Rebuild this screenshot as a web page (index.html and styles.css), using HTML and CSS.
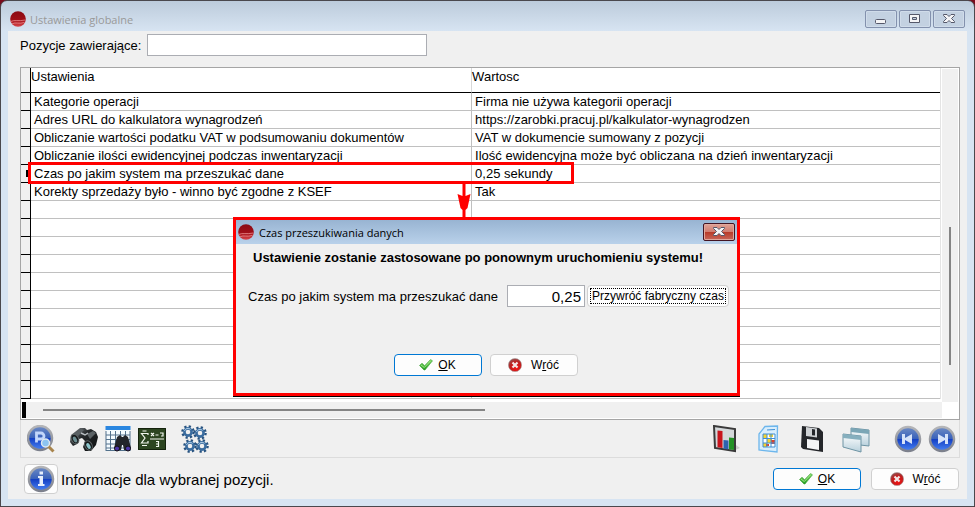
FILE: index.html
```
<!DOCTYPE html>
<html lang="pl">
<head>
  <meta charset="UTF-8" />
  <meta name="viewport" content="width=device-width, initial-scale=1.0" />
  <title>Ustawienia globalne</title>
  <link rel="stylesheet" href="styles.css">
</head>
<body>
  <svg class="defs" aria-hidden="true">
    <defs>
      <linearGradient id="redBall" x1="0" y1="0" x2="0" y2="1">
        <stop offset="0" stop-color="#8a0a14" />
        <stop offset="0.55" stop-color="#a00f18" />
        <stop offset="1" stop-color="#d8474c" />
      </linearGradient>
      <linearGradient id="green" x1="0" y1="0" x2="0" y2="1">
        <stop offset="0" stop-color="#7fdc62" />
        <stop offset="1" stop-color="#1f9a1c" />
      </linearGradient>
      <radialGradient id="redCross" cx="0.6" cy="0.75" r="0.8">
        <stop offset="0" stop-color="#f01414" />
        <stop offset="0.6" stop-color="#c01c1c" />
        <stop offset="1" stop-color="#8c5a5a" />
      </radialGradient>
      <linearGradient id="blue" x1="0" y1="0" x2="0" y2="1">
        <stop offset="0" stop-color="#6f8cc4" />
        <stop offset="0.48" stop-color="#3a62ba" />
        <stop offset="0.52" stop-color="#1440c4" />
        <stop offset="1" stop-color="#4a84f4" />
      </linearGradient>
      <linearGradient id="ring" x1="0" y1="0" x2="0" y2="1">
        <stop offset="0" stop-color="#b4b5b8" />
        <stop offset="1" stop-color="#7c808c" />
      </linearGradient>
      <linearGradient id="metal" x1="0" y1="0" x2="1" y2="1">
        <stop offset="0" stop-color="#8a9094" />
        <stop offset="0.4" stop-color="#25292b" />
        <stop offset="1" stop-color="#0c0e0f" />
      </linearGradient>
      <linearGradient id="glass" x1="0" y1="0" x2="0" y2="1">
        <stop offset="0" stop-color="#ffffff" />
        <stop offset="1" stop-color="#b8d0dc" />
      </linearGradient>
      <symbol id="logo" viewBox="0 0 16 16">
        <circle cx="8" cy="8" r="7.8" fill="url(#redBall)" />
        <path d="M.8 10.5C4 8.5 9 10.5 15.3 9M2 12.8c4-2 7 .6 12.5-1.4" fill="none" stroke="#e88a8c" stroke-width=".8" />
      </symbol>
      <symbol id="check" viewBox="0 0 14 12">
        <path d="M.5 6.5 3 4.2l2.6 2.5L11.5.6l2 1.200L6 11 5 11z" fill="url(#green)" stroke="#3b9c35" stroke-width=".6" />
        <path d="M2 6l3.300 2.500L11.800 1.600" fill="none" stroke="#b9f0a2" stroke-width=".8" />
      </symbol>
      <symbol id="cross" viewBox="0 0 14 14">
        <circle cx="7" cy="7" r="6.6" fill="url(#redCross)" stroke="#a99" stroke-width=".6" />
        <path d="M4.500 4.500l5 5m0-5l-5 5" stroke="#f4e6e6" stroke-width="2.200" />
      </symbol>
      <symbol id="binoculars" viewBox="0 0 28 28">
        <path d="M1 10 10 3l5 0 2 2 4-1 5 3 2 5-2 8-5 6-6 0-2-4 2-6-3-3-3 1-2 5-4 2-3-4z" fill="url(#metal)" />
        <path d="M4 9l7-5 3 1-6 6M17 9l6-3 3 2-6 6" fill="#5b6265" />
        <path d="M11 8l4 2 3-2" stroke="#b6bcc0" stroke-width="1.5" fill="none" />
        <ellipse cx="5" cy="14" rx="3.5" ry="5" fill="#15191a" stroke="#5d6466" transform="rotate(-28 5 14)" />
        <ellipse cx="5" cy="14.5" rx="1.8" ry="3.2" fill="#6c8e92" transform="rotate(-28 5 14.5)" />
        <ellipse cx="18.5" cy="20.500" rx="3.5" ry="5" fill="#15191a" stroke="#5d6466" transform="rotate(-28 18.5 20.5)" />
        <ellipse cx="18.5" cy="21" rx="1.8" ry="3.2" fill="#8fc6cc" transform="rotate(-28 18.5 21)" />
      </symbol>
      <symbol id="gear" viewBox="0 0 14 14">
        <circle cx="7" cy="7" r="5.6" fill="none" stroke="#27527f" stroke-width="2.400" stroke-dasharray="2.200 2.200" />
        <circle cx="7" cy="7" r="3.600" fill="none" stroke="#3a6c9f" stroke-width="2.600" />
        <path d="M3.500 6a3.600 3.600 0 0 1 6-1.600" fill="none" stroke="#b2d0ea" />
      </symbol>
      <symbol id="closeX" viewBox="0 0 12 12">
        <path d="M.5 1.500h3.500l2 2 2-2h3.500v1L8.500 5.500l3 3v1H8l-2-2-2 2H.5v-1l3-3-3-3z" fill="#f4f4f6" stroke="#55586a" />
      </symbol>
    </defs>
  </svg>

  <div class="window">
    <header class="titlebar">
      <svg class="logo"><use href="#logo" /></svg>
      <h1 class="title">Ustawienia globalne</h1>
      <div class="win-btns">
        <button class="win-btn" aria-label="Minimalizuj">
          <svg width="12" height="12" viewBox="0 0 12 12"><rect x=".5" y="6.500" width="10" height="4" rx="1" fill="#f4f4f6" stroke="#55586a" /></svg>
        </button>
        <button class="win-btn" aria-label="Maksymalizuj">
          <svg width="12" height="12" viewBox="0 0 12 12"><path d="M.5 1.500h10v8h-10zM3.500 4.500h4v2h-4z" fill="#f4f4f6" fill-rule="evenodd" stroke="#55586a" /></svg>
        </button>
        <button class="win-btn" aria-label="Zamknij"><svg width="12" height="12"><use href="#closeX" /></svg></button>
      </div>
    </header>

    <main class="content">
      <div class="search">
        <label for="filter">Pozycje zawierające:</label>
        <input type="text" id="filter" class="field">
      </div>

      <div class="grid">
        <div class="grid-body">
          <table class="settings">
            <colgroup>
              <col class="col-mark">
              <col class="col-name">
              <col>
            </colgroup>
            <thead>
              <tr>
                <th></th>
                <th>Ustawienia</th>
                <th>Wartosc</th>
              </tr>
            </thead>
            <tbody id="settingsBody"></tbody>
          </table>
          <div class="vscroll"><div class="vthumb"></div></div>
        </div>
        <div class="hscroll"><div class="hstop"></div><div class="hthumb"></div></div>
      </div>

      <div class="toolbar">
        <button class="tool" aria-label="Podgląd">
          <svg viewBox="0 0 28 28">
            <circle cx="13" cy="13" r="12" fill="url(#blue)" stroke="url(#ring)" stroke-width="2.500" />
            <path d="M9.500 17.500V8h4.500a3 3 0 0 1 0 6H10" fill="none" stroke="#c3d6fa" stroke-width="2.800" />
            <path d="M21 21l5.500 5.500" stroke="#a8844c" stroke-width="3" />
            <circle cx="18.500" cy="18" r="4" fill="#8cc4f2" stroke="#dfe8ee" stroke-width="1.500" />
          </svg>
        </button>
        <button class="tool gap-s" aria-label="Szukaj"><svg><use href="#binoculars" /></svg></button>
        <button class="tool" aria-label="Szukaj w tabeli">
          <svg viewBox="0 0 28 28">
            <path d="M2 1h24v25H2z" fill="#f4fbff" />
            <path d="M2 6v20M6.500 6v20M11.500 6v20M16.500 6v20M21.500 6v20M26 6v20M2 10h24M2 14.500h24M2 19h24M2 23h24M2 25.500h24" stroke="#52718c" fill="none" />
            <path d="M1.500 1h25v4h-25z" fill="#2a86e0" />
            <path d="M10 23l3-11 3-2 2 2h1l2-2 3 2 3 11-2 3-5-1-1-5h-1l-1 5-5 1z" fill="#22252a" />
            <circle cx="13" cy="23.500" r="2.500" fill="#4b35a8" stroke="#111" />
            <circle cx="24" cy="23.500" r="2.500" fill="#4b35a8" stroke="#111" />
          </svg>
        </button>
        <button class="tool" aria-label="Formuła">
          <svg viewBox="0 0 28 28">
            <path d="M0 3h28v22H0z" fill="#2c4520" />
            <path d="M.5 3.500h27v21H.5z" fill="none" stroke="#14220c" />
            <path d="M10 10V8.500H3.500L7 13l-3.500 5H10V16M4.500 6h4M4 20.500h5M12 14h14M13 8l3 3m0-3l-3 3M17.500 10h3M22 8h3v3h-2M18 16.500h2.500v5H18M18 19h2" fill="none" stroke="#f2f6ee" stroke-width="1.200" />
          </svg>
        </button>
        <button class="tool gap-s" aria-label="Opcje">
          <svg viewBox="0 0 28 28">
            <use href="#gear" x="0" y="0" width="14" height="14" />
            <use href="#gear" x="12" y="1" width="14" height="14" />
            <use href="#gear" x="2" y="14" width="14" height="14" />
            <use href="#gear" x="14" y="14" width="14" height="14" />
          </svg>
        </button>
        <div class="spacer"></div>
        <button class="tool" aria-label="Wykres">
          <svg viewBox="0 0 28 28">
            <path d="M20 26l7-3-4-3z" fill="#ccc" />
            <path d="M1 1l21 3v22L2 23z" fill="#d4d8da" stroke="#3a3a3a" stroke-width="2" />
            <path d="M4.500 5.500l5 .5v17l-5-.8z" fill="#c8141c" />
            <path d="M10.500 15l5 .5v9l-5-.8z" fill="#2c62ae" />
            <path d="M16 12.500l5 .5v12l-5-.8z" fill="#239225" />
          </svg>
        </button>
        <button class="tool gap-s" aria-label="Arkusz">
          <svg viewBox="0 0 28 28">
            <path d="M9 1.500 21.500 1 21 27 3 25V9z" fill="#d9eefc" stroke="#6db6ec" stroke-width="1.300" />
            <path d="M7 9h12v13H7z" fill="#fff" />
            <path d="M7 9h4v4H7zM11 14h5v4h-5zM7 18h4v4H7zM13 9h4v3h-4z" fill="#f6d430" />
            <path d="M15 15h4v4h-4zM10 19h3v2h-3z" fill="#e0452c" />
            <path d="M7 9h12v13H7zM11 9v13M15 9v13M7 13.500h12M7 18h12M11 5l8-.5" fill="none" stroke="#3f8ed4" />
          </svg>
        </button>
        <button class="tool gap-s" aria-label="Zapisz">
          <svg viewBox="0 0 28 28">
            <path d="M3 1l17 2 4 4v20L4 24 2 22z" fill="#24262a" />
            <path d="M7 2l11 1.500v9L7 11z" fill="#cfd2d5" />
            <path d="M13 4l3 .4v6.200l-3-.4z" fill="#24262a" />
            <path d="M8 14l12 1.500V25L8 23z" fill="#f4f5f6" />
          </svg>
        </button>
        <button class="tool gap-s" aria-label="Okna">
          <svg viewBox="0 0 28 28">
            <path d="M9 3l18 2v16L9 19z" fill="url(#glass)" stroke="#6e94a4" />
            <path d="M9 3l18 2v4L9 7z" fill="#7ba6b6" />
            <path d="M1 9l18 2v16L1 22z" fill="url(#glass)" stroke="#6e94a4" />
            <path d="M1 9l18 2v4L1 13z" fill="#86afbe" />
          </svg>
        </button>
        <button class="tool gap-m" aria-label="Pierwsza">
          <svg viewBox="0 0 28 28">
            <circle cx="14" cy="14" r="12" fill="url(#blue)" stroke="url(#ring)" stroke-width="2.500" />
            <path d="M8 9h3v4l7-4v10l-7-4v4H8z" fill="#d6e2f8" />
          </svg>
        </button>
        <button class="tool" aria-label="Ostatnia">
          <svg viewBox="0 0 28 28">
            <circle cx="14" cy="14" r="12" fill="url(#blue)" stroke="url(#ring)" stroke-width="2.500" />
            <path d="M20 9h-3v4l-7-4v10l7-4v4h3z" fill="#d6e2f8" />
          </svg>
        </button>
      </div>

      <footer class="footer">
        <button class="info-btn" aria-label="Informacje">
          <svg viewBox="0 0 28 28">
            <circle cx="14" cy="14" r="12" fill="url(#blue)" stroke="url(#ring)" stroke-width="2.500" />
            <path d="M12.500 6.500h3.500v3h-3.500zM11 11h5v8h1.500v2H11v-2h1.500v-6H11z" fill="#e6eefc" />
          </svg>
        </button>
        <span class="info-text">Informacje dla wybranej pozycji.</span>
        <button class="btn btn-default"><svg class="check"><use href="#check" /></svg><span><u>O</u>K</span></button>
        <button class="btn"><svg class="cross"><use href="#cross" /></svg><span>W<u>r</u>óć</span></button>
      </footer>
    </main>

    <div class="marker"></div>
    <svg class="arrow" viewBox="0 0 14 36"><path d="M5.500 0h3v12l5-2-3 14-2 2v8h-3v-8l-2-2-3-14 5 2z" fill="#f00" /></svg>

    <section class="dialog" role="dialog" aria-labelledby="dialogTitle">
      <header class="dialog-bar">
        <svg class="logo"><use href="#logo" /></svg>
        <h2 class="dialog-title" id="dialogTitle">Czas przeszukiwania danych</h2>
        <button class="win-btn close" aria-label="Zamknij"><svg width="12" height="12"><use href="#closeX" /></svg></button>
      </header>
      <p class="notice">Ustawienie zostanie zastosowane po ponownym uruchomieniu systemu!</p>
      <div class="time-row">
        <label for="time">Czas po jakim system ma przeszukać dane</label>
        <input type="text" id="time" class="field time" value="0,25">
        <button class="btn reset"><span>Przywróć fabryczny czas</span></button>
      </div>
      <div class="dialog-btns">
        <button class="btn btn-default"><svg class="check"><use href="#check" /></svg><span><u>O</u>K</span></button>
        <button class="btn"><svg class="cross"><use href="#cross" /></svg><span>W<u>r</u>óć</span></button>
      </div>
    </section>
  </div>

  <script>
    const rowCount = 17;
    const selected = 4;

    const settings = [
      ["Kategorie operacji", "Firma nie używa kategorii operacji"],
      ["Adres URL do kalkulatora wynagrodzeń", "https://zarobki.pracuj.pl/kalkulator-wynagrodzen"],
      ["Obliczanie wartości podatku VAT w podsumowaniu dokumentów", "VAT w dokumencie sumowany z pozycji"],
      ["Obliczanie ilości ewidencyjnej podczas inwentaryzacji", "Ilość ewidencyjna może być obliczana na dzień inwentaryzacji"],
      ["Czas po jakim system ma przeszukać dane", "0,25 sekundy"],
      ["Korekty sprzedaży było - winno być zgodne z KSEF", "Tak"],
    ];

    const body = document.getElementById("settingsBody");
    for (let i = 0; i < rowCount; i++) {
      const [name, value] = settings[i] || ["", ""];
      const row = document.createElement("tr");
      if (i === selected) row.classList.add("current");
      row.innerHTML = `<td></td><td>${name}</td><td>${value}</td>`;
      body.appendChild(row);
    }
  </script>
</body>
</html>
```
FILE: styles.css
```
* {
  box-sizing: border-box;
}
body {
  margin: 0;
  background: #7a0a1c;
  color: #000;
  font-family: "Liberation Sans", Arial, sans-serif;
  font-size: 13px;
}
button, input {
  font-family: inherit;
  color: inherit;
}
button {
  padding: 0;
}
.defs {
  position: absolute;
  width: 0;
  height: 0;
}
.window {
  position: relative;
  display: flex;
  flex-direction: column;
  min-height: 100vh;
  padding: 0 7px 7px;
  border: 1px solid #4a484d;
  border-radius: 7px 7px 0 0;
  background: linear-gradient(#bccbdb, #d7e4f2 30px);
}
.titlebar {
  display: flex;
  align-items: center;
  gap: 4px;
  height: 30px;
  padding: 6px 2px 0;
}
.logo {
  width: 16px;
  height: 16px;
}
.title {
  flex: 1;
  margin: 0;
  color: #999;
  font: 11px "Open Sans", sans-serif;
}
.win-btns {
  display: flex;
  gap: 2px;
}
.win-btn {
  display: flex;
  align-items: center;
  justify-content: center;
  width: 32px;
  height: 18px;
  border: 1px solid #8391ad;
  border-radius: 2px;
  background: #c3d1e1;
  box-shadow: inset 0 0 0 1px #d0dcea;
}
.content {
  flex: 1;
  display: flex;
  flex-direction: column;
  padding: 3px 7px 2px 12px;
  background: #f0f0f0;
}
.search {
  display: flex;
  align-items: center;
  gap: 6px;
  margin-bottom: 11px;
}
.field {
  width: 280px;
  height: 22px;
  padding: 0 3px;
  border: 1px solid #abadb3;
  background: #fff;
}
.grid {
  border: 1px solid #a5a5a5;
  background: #fff;
}
.grid-body {
  display: flex;
}
.settings {
  flex: 1;
  table-layout: fixed;
  border-spacing: 0;
  border-right: 1px solid #e4e4e4;
  margin-bottom: 3px;
}
.col-mark {
  width: 10px;
}
.col-name {
  width: 48%;
}
.settings th {
  height: 25px;
  padding: 0;
  border-bottom: 1px solid #000;
  border-right: 1px solid #d8d8d8;
  font-weight: normal;
  text-align: left;
  vertical-align: top;
  line-height: 17px;
}
.settings td {
  height: 18px;
  padding: 0 3px;
  border-bottom: 1px solid #c0c0c0;
  border-right: 1px solid #c0c0c0;
  line-height: 17px;
  white-space: nowrap;
}
.settings th:last-child, .settings td:last-child {
  border-right: 0;
}
.settings tr > :first-child {
  padding: 0;
  border-right-color: #000;
  background: #f0f0f0;
}
.settings td:first-child {
  border-bottom-color: #000;
}
.current td:first-child::after {
  content: "";
  display: block;
  width: 3px;
  height: 7px;
  margin-left: 5px;
  background: #000;
}
.vscroll {
  width: 16px;
  margin: 1px 1px 0;
  padding: 158px 7px 0;
  background: #f0f0f0;
}
.vthumb {
  width: 2px;
  height: 138px;
  background: #858585;
}
.hscroll {
  display: flex;
  align-items: center;
  gap: 17px;
  height: 16px;
  margin: 0 17px 1px 1px;
  background: #f0f0f0;
}
.hstop {
  width: 4px;
  height: 16px;
  background: #000;
}
.hthumb {
  width: 48%;
  height: 2px;
  background: #858585;
}
.toolbar {
  display: flex;
  align-items: center;
  gap: 6px;
  height: 38px;
  padding: 0 3px 0 6px;
  border: 1px solid #dcdcdc;
  border-top: 0;
}
.tool {
  width: 28px;
  height: 28px;
  border: 0;
  background: none;
}
.tool svg {
  display: block;
  width: 28px;
  height: 28px;
}
.gap-s {
  margin-left: 9px;
}
.gap-m {
  margin-left: 18px;
}
.spacer {
  flex: 1;
}
.footer {
  display: flex;
  align-items: center;
  gap: 10px;
  padding: 6px 1px 0 4px;
}
.info-btn {
  width: 34px;
  height: 30px;
  border: 1px solid #d0d0d0;
  border-radius: 4px;
  background: #fdfdfd;
}
.info-btn svg {
  display: block;
  width: 28px;
  height: 28px;
  margin: auto;
}
.info-text {
  flex: 1;
  margin-left: -7px;
  font-size: 15px;
}
.btn {
  display: flex;
  align-items: center;
  justify-content: center;
  gap: 5px;
  width: 88px;
  height: 22px;
  border: 1px solid #d0d0d0;
  border-radius: 4px;
  background: #fdfdfd;
  font-size: 12px;
}
.btn-default {
  border-color: #0078d4;
}
.check {
  width: 14px;
  height: 12px;
}
.cross {
  width: 14px;
  height: 14px;
  margin-right: 4px;
}
.marker {
  position: absolute;
  left: 27px;
  top: 161px;
  width: 546px;
  height: 22px;
  border: 3px solid #f00;
}
.arrow {
  position: absolute;
  left: 456px;
  top: 183px;
  width: 14px;
  height: 36px;
}
.dialog {
  position: absolute;
  left: 232px;
  top: 216px;
  width: 507px;
  height: 179px;
  border: 3px solid #f00;
  background: #f0f0f0;
  box-shadow: 0 1px #000;
}
.dialog-bar {
  display: flex;
  align-items: center;
  gap: 5px;
  height: 24px;
  padding: 0 2px;
  background: linear-gradient(#98b4d2, #b9d1ea);
}
.dialog-title {
  flex: 1;
  margin: 0;
  font: 11px "Open Sans", sans-serif;
}
.close {
  border-color: #431422;
  background: linear-gradient(#e0a296, #d07c70 49%, #b83a28 51%, #c8665a);
  box-shadow: inset 0 0 0 1px #e0a89e;
}
.notice {
  margin: 6px 0 19px;
  padding-left: 17px;
  font-weight: bold;
  line-height: 16px;
}
.time-row {
  display: flex;
  align-items: center;
  gap: 2px;
  padding-left: 12px;
}
.time {
  width: 78px;
  margin-left: 7px;
  font-size: 15px;
  text-align: right;
}
.reset {
  width: 142px;
  padding: 2px;
}
.reset span {
  flex: 1;
  border: 1px dotted #000;
  line-height: 14px;
}
.dialog-btns {
  display: flex;
  justify-content: center;
  gap: 8px;
  margin-top: 47px;
  padding-right: 2px;
}
```
